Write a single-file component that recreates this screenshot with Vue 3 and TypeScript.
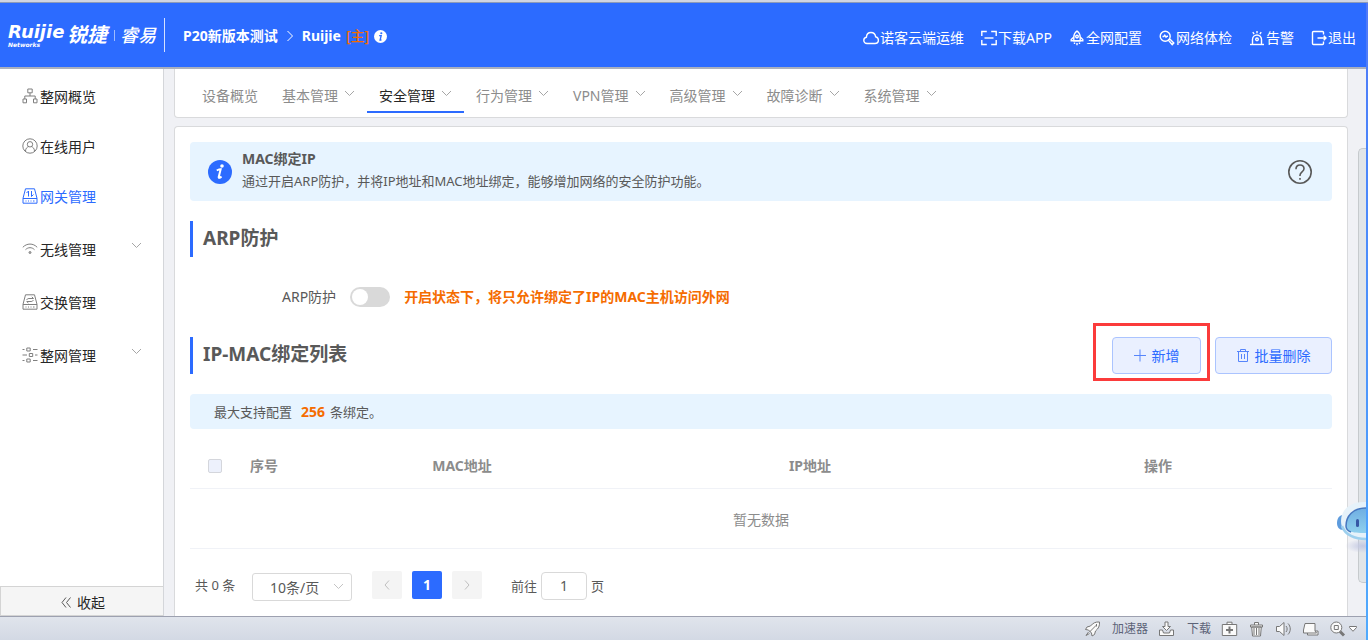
<script setup lang="ts">
import { ref } from 'vue'

interface HeaderLink { label: string; paths: string[] }
interface SideItem { label: string; paths: string[]; expandable?: boolean; active?: boolean; tall?: boolean }
interface TabItem { label: string; expandable: boolean; active?: boolean }

const chevron = 'M1 1l4.5 4.5L10 1'

const headerLinks: HeaderLink[] = [
  { label: '诺客云端运维', paths: ['M4 13.5C2 13.5 .8 12 .8 10.3 .8 8.5 2 7.400 3.400 7.200 3.600 4.300 5.500 2.500 8 2.500c2.400 0 4.300 1.700 4.600 4.200 1.700.4 2.800 1.700 2.800 3.400 0 2-1.400 3.400-3.400 3.400z'] },
  { label: '下载APP', paths: ['M.8 6V1.500h5M10.200 1.500h5V6M15.200 10v4.500h-5M5.800 14.500h-5V10', 'M3.500 8h9'] },
  { label: '全网配置', paths: ['M8 1C5.800 2.600 4.800 4.600 4.800 7v3.800h6.400V7C11.200 4.600 10.200 2.600 8 1z', 'M4.800 7L2.200 9.500v1.300h11.600V9.500L11.200 7', 'M6.700 6.500a1.300 1.300 0 1 0 2.600 0 1.300 1.300 0 1 0-2.600 0', 'M5.500 12.500v1.500M8 13v2.200M10.500 12.500v1.500'] },
  { label: '网络体检', paths: ['M1.200 6.300a5 5 0 1 0 10 0 5 5 0 1 0-10 0', 'M3.500 6.500h1.300l1-1.300 1.200 2 1-1h1', 'M9.500 10.300l1.300-1.300 4 4-1.600 1.600z'] },
  { label: '告警', paths: ['M1 14.500h14', 'M3.500 14V9.500a4.500 4.500 0 0 1 9 0V14', 'M6.700 9.300a1.300 1.300 0 1 0 2.600 0 1.300 1.300 0 1 0-2.600 0', 'M8 1v2.300M3.800 2.200l1.300 2M12.200 2.200l-1.300 2'] },
  { label: '退出', paths: ['M12.500 4.500V2.500a1 1 0 0 0-1-1H2.500a1 1 0 0 0-1 1v11a1 1 0 0 0 1 1h9a1 1 0 0 0 1-1v-2', 'M6.500 8h8.500M12.700 5.700L15 8l-2.300 2.300'] },
]

const sideItems: SideItem[] = [
  { label: '整网概览', paths: ['M5.800 1h4.400v3.800H5.800z', 'M1 11h3.500v3.800H1zM11.500 11H15v3.800h-3.500z', 'M8 5v3M2.800 11V8h10.400v3'] },
  { label: '在线用户', paths: ['M.8 8a7.200 7.200 0 1 0 14.400 0A7.200 7.200 0 1 0 .8 8', 'M5.300 6.300a2.700 2.700 0 1 0 5.400 0 2.700 2.700 0 1 0-5.400 0', 'M3.500 13c.2-2.600 1.300-3.800 3-4.300M12.500 13c-.2-2.600-1.300-3.800-3-4.300'] },
  { label: '网关管理', active: true, paths: ['M3.500.8h9l2.500 9.500v4.900H1v-4.900z', 'M1 10.500h14M3.500 13h1M6 13h1M8.500 13h1M11 13h1.500', 'M6.500 8.500V3L4.500 5M9.500 3v5.500l2-2'] },
  { label: '无线管理', expandable: true, tall: true, paths: ['M.8 6.300C4.800 2 11.200 2 15.200 6.300', 'M3.500 8.700c2.600-2.700 6.400-2.700 9 0', 'M7 11.500a1 1 0 1 0 2 0 1 1 0 1 0-2 0M7.500 11.500h1'] },
  { label: '交换管理', tall: true, paths: ['M3.500.8h9l2.500 9.500v4.900H1v-4.900z', 'M1 10.500h14M3.500 13h1M6 13h1M8.500 13h1M11 13h1.500', 'M11.500 4.500H7c-1.300 0-2 .5-2.200 1.500M9.800 2.800l1.700 1.700M4.700 7.500H9c1.300 0 2-.5 2.200-1.500M6.400 9L4.700 7.500'] },
  { label: '整网管理', expandable: true, tall: true, paths: ['M.5 2.500h2M11 2.500h4.500M4.800 1h3.400v3H4.800z', 'M.5 8h4.500M13 8h2.500M7.300 6.500h3.400v3H7.300z', 'M.5 13.500h2M11 13.500h4.500M4.800 12h3.400v3H4.800z'] },
]

const tabs: TabItem[] = [
  { label: '设备概览', expandable: false },
  { label: '基本管理', expandable: true },
  { label: '安全管理', expandable: true, active: true },
  { label: '行为管理', expandable: true },
  { label: 'VPN管理', expandable: true },
  { label: '高级管理', expandable: true },
  { label: '故障诊断', expandable: true },
  { label: '系统管理', expandable: true },
]

const arpEnabled = ref(false)
const allChecked = ref(false)
const pageSize = ref('10')
const targetPage = ref('1')
</script>

<template>
  <div class="window">
    <div class="top-strip"></div>
    <div class="frame">
      <div class="page">
        <header class="header">
          <a href="#" class="logo">
            <span class="logo-latin"><span class="logo-name">Ruijie</span><span class="logo-sub">Networks</span></span>
            <span class="logo-cn">锐捷</span>
            <span class="logo-bar"></span>
            <span class="logo-brand">睿易</span>
          </a>
          <div class="crumbs">
            <a href="#">P20新版本测试</a>
            <svg class="crumb-arrow" viewBox="0 0 8 12"><path d="M1.500 1l5 5-5 5" /></svg>
            <span>Ruijie</span>
            <span class="role">[主]</span>
            <svg class="crumb-info" viewBox="0 0 24 24">
              <circle cx="12" cy="12" r="12" fill="#fff" />
              <circle cx="13.500" cy="6" r="2" fill="#2c6bff" />
              <path d="M9.500 10.500h3.700l-1.900 8h2.500" fill="none" stroke="#2c6bff" stroke-width="2.500" />
            </svg>
          </div>
          <nav class="header-nav">
            <a v-for="link in headerLinks" :key="link.label" href="#">
              <svg class="icon header-icon" viewBox="0 0 16 16"><path v-for="d in link.paths" :key="d" :d="d" /></svg>
              <span>{{ link.label }}</span>
            </a>
          </nav>
        </header>

        <div class="body">
          <aside class="sidebar">
            <nav class="side-nav">
              <a v-for="item in sideItems" :key="item.label" href="#" class="side-item" :class="{ active: item.active, tall: item.tall }">
                <svg class="icon" viewBox="0 0 16 16"><path v-for="d in item.paths" :key="d" :d="d" /></svg>
                <span>{{ item.label }}</span>
                <svg v-if="item.expandable" class="chevron" viewBox="0 0 11 7"><path :d="chevron" /></svg>
              </a>
            </nav>
            <button type="button" class="collapse">
              <svg viewBox="0 0 10 11"><path d="M5 .5l-4 5 4 5M9.500.5l-4 5 4 5" /></svg>
              <span>收起</span>
            </button>
          </aside>

          <main class="main">
            <nav class="card tabs">
              <a v-for="tab in tabs" :key="tab.label" href="#" class="tab" :class="{ active: tab.active }">
                <span>{{ tab.label }}</span>
                <svg v-if="tab.expandable" class="chevron" viewBox="0 0 11 7"><path :d="chevron" /></svg>
              </a>
            </nav>

            <section class="card content">
              <div class="notice">
                <svg class="notice-icon" viewBox="0 0 24 24">
                  <circle cx="12" cy="12" r="12" fill="#2c6bff" />
                  <circle cx="14" cy="6" r="1.800" fill="#fff" />
                  <path d="M8.800 10.500c1.200-.9 2.500-1.500 3.900-1.300l-2 7.800c-.2 1.300 1 1.200 2.800-.5" fill="none" stroke="#fff" stroke-width="2" />
                </svg>
                <div class="notice-text">
                  <strong>MAC绑定IP</strong>
                  <p>通过开启ARP防护，并将IP地址和MAC地址绑定，能够增加网络的安全防护功能。</p>
                </div>
                <button type="button" class="help" aria-label="帮助">
                  <svg viewBox="0 0 24 24">
                    <circle cx="12" cy="12" r="11.200" />
                    <path d="M8 9.300C8 6.500 9.600 5 12 5s4 1.500 4 3.700c0 3-4 3.300-4 6.500v.8M12 18v1.800" />
                  </svg>
                </button>
              </div>

              <h2 class="section-title">ARP防护</h2>

              <div class="arp-row">
                <label for="arp-switch">ARP防护</label>
                <input id="arp-switch" v-model="arpEnabled" type="checkbox" role="switch" class="switch" />
                <span class="warning">开启状态下，将只允许绑定了IP的MAC主机访问外网</span>
              </div>

              <div class="list-head">
                <h2 class="section-title">IP-MAC绑定列表</h2>
                <div class="actions">
                  <span class="highlighted">
                    <button type="button" class="btn btn-add">
                      <svg viewBox="0 0 12 12"><path d="M6 0v12M0 6h12" /></svg>
                      <span>新增</span>
                    </button>
                  </span>
                  <button type="button" class="btn btn-delete">
                    <svg viewBox="0 0 12 13"><path d="M0 2.500h12M3.500 2.500v-2h5v2M1.500 2.500v10h9v-10M4.500 5v5M7.500 5v5" /></svg>
                    <span>批量删除</span>
                  </button>
                </div>
              </div>

              <div class="limit">最大支持配置<b>256</b>条绑定。</div>

              <table class="table">
                <colgroup><col class="col-check" /><col class="col-index" /><col /><col /><col /></colgroup>
                <thead>
                  <tr>
                    <th><input v-model="allChecked" type="checkbox" class="check" aria-label="全选" /></th>
                    <th class="index">序号</th>
                    <th>MAC地址</th>
                    <th>IP地址</th>
                    <th>操作</th>
                  </tr>
                </thead>
                <tbody><tr><td colspan="5">暂无数据</td></tr></tbody>
              </table>

              <div class="pagination">
                <span class="total">共 0 条</span>
                <span class="size">
                  <select v-model="pageSize" aria-label="每页条数">
                    <option value="10">10条/页</option>
                  </select>
                  <svg class="chevron" viewBox="0 0 11 7"><path :d="chevron" /></svg>
                </span>
                <div class="pages">
                  <button type="button" aria-label="上一页"><svg viewBox="0 0 6 10"><path d="M5 .5L1 5l4 4.500" /></svg></button>
                  <button type="button" class="current">1</button>
                  <button type="button" aria-label="下一页"><svg viewBox="0 0 6 10"><path d="M1 .5L5 5 1 9.500" /></svg></button>
                </div>
                <label class="jump">前往<input v-model="targetPage" type="text" />页</label>
              </div>
            </section>
          </main>

          <div class="scroll-track"><div class="scroll-thumb"></div></div>

          <svg class="robot" viewBox="0 0 30 60">
            <defs>
              <linearGradient id="visor" x1="0" y1="0" x2="0" y2="1"><stop offset="0" stop-color="#6faee2" /><stop offset="1" stop-color="#8fd0ee" /></linearGradient>
              <radialGradient id="shade"><stop offset="0" stop-color="#c3c8e2" /><stop offset="1" stop-color="#c3c8e2" stop-opacity="0" /></radialGradient>
            </defs>
            <ellipse cx="27" cy="45" rx="18" ry="7" fill="url(#shade)" />
            <path d="M7 14C3 14 1 18 1 22s2 7 6 7z" fill="#5d9bdd" />
            <path d="M30 1C14 0 5 9 5 20s9 19 25 19z" fill="#e6f2fa" />
            <path d="M6 25c3 9 13 13 24 13" fill="none" stroke="#9ed0ee" stroke-width="2.500" />
            <path d="M30 7C17 7 10 15 10 25c0 5 4 7 20 7z" fill="url(#visor)" />
            <path d="M30 7C17 7 10 15 10 25c0 4 2 5 5 6" fill="none" stroke="#4777bf" stroke-width="1.500" />
            <rect x="20" y="18" width="3" height="8" rx="1.500" fill="#3556a5" />
          </svg>
        </div>

        <footer class="status">
          <button type="button" class="with-text accel">
            <svg class="s-icon" viewBox="0 0 16 16"><path d="M15 1c-4-.3-6.500 1-9 4L2.500 6 1 8.500l3 .5 3 3 .5 3L10 13.500l1-3.500c3-2.500 4.300-5 4-9z" /><path d="M11.800 4.200L5 11M4 11l-2.500 3.500L5 12.500M12 3v2.500" /></svg>
            <span>加速器</span>
          </button>
          <button type="button" class="with-text">
            <svg class="s-icon" viewBox="0 0 16 16"><path d="M1 9h3l1 3h6l1-3h3v5.500H1z" /><path d="M6.500 1h3v4.500H12L8 9.500 4 5.500h2.500z" /></svg>
            <span>下载</span>
          </button>
          <button type="button" aria-label="修复"><svg class="s-icon" viewBox="0 0 16 16"><path d="M5.500 3.500V1.200h5v2.300M.8 3.500h14.400v11H.8z" /><path class="dark" d="M8 5.500v7M4.500 9h7" /></svg></button>
          <button type="button" aria-label="清理"><svg class="s-icon" viewBox="0 0 16 16"><path d="M2 4h12v2H2zM6 4V1.500h4V4M3.200 6h9.600L12 15H4z" /><path d="M5.500 7v7M8 7v7M10.500 7v7" /></svg></button>
          <button type="button" aria-label="声音"><svg class="s-icon" viewBox="0 0 16 16"><path d="M1 5.500h3L8.500 1.500v13L4 10.500H1z" /><path class="line" d="M10.500 5c1.500 1.700 1.500 4.300 0 6M12.500 2.500c3 3 3 8 0 11" /></svg></button>
          <button type="button" aria-label="窗口"><svg class="s-icon" viewBox="0 0 16 16"><path d="M5 10h10.500v4H5z" /><path d="M2.500 2.500h10V10l1.500 2H1V9z" /></svg></button>
          <button type="button" aria-label="缩放" class="zoom">
            <svg class="s-icon" viewBox="0 0 16 16"><path class="handle" d="M10 10l4.500 4.500" /><circle cx="6.800" cy="6.500" r="5.500" /><path d="M4.800 4.500h4v4h-4z" /></svg>
            <svg class="caret" viewBox="0 0 8 6"><path d="M.5.500h7v1L4 5.300.5 1.500z" /></svg>
          </button>
        </footer>
      </div>
      <div class="edge"></div>
    </div>
  </div>
</template>

<style>
body { margin: 0; }
</style>

<style scoped>
* { box-sizing: border-box; }
.window {
  display: flex;
  flex-direction: column;
  height: 100vh;
  overflow: hidden;
  font-family: "Noto Sans", "Noto Sans CJK SC", sans-serif;
  font-size: 14px;
  line-height: 20px;
  color: #595959;
  background: #f0f1f5;
}
a { color: inherit; text-decoration: none; }
button, input, select { font: inherit; color: inherit; margin: 0; padding: 0; }
button { border: 0; background: none; cursor: pointer; }
p, h2 { margin: 0; }
svg { display: block; flex: none; }
.icon { width: 16px; height: 16px; fill: none; stroke: currentColor; stroke-width: 1; }
.chevron { width: 11px; height: 7px; fill: none; stroke: #a6a6a6; stroke-width: 1; }

.top-strip { flex: none; height: 3px; background: #d0d5e2; border-bottom: 1px solid #8d9bb8; }
.frame { flex: 1; display: flex; min-height: 0; }
.page { flex: 1; display: flex; flex-direction: column; min-width: 0; }
.edge { flex: none; width: 2px; background: linear-gradient(#5078f8, #4a85fb 25%, #50aafd); }

.header {
  flex: none;
  display: flex;
  align-items: center;
  height: 66px;
  padding: 0 10px 0 8px;
  background: #2c6bff;
  border-bottom: 2px solid #aab0bd;
  color: #fff;
}
.logo { display: flex; align-items: center; width: 157px; height: 34px; border-right: 1px solid #d5e1ff; font-style: italic; font-weight: 700; white-space: nowrap; }
.logo-latin { display: flex; flex-direction: column; width: 59px; font-family: "DejaVu Sans", sans-serif; }
.logo-name { font-size: 18px; line-height: 20px; }
.logo-sub { font-size: 6px; line-height: 6px; }
.logo-cn { font-size: 20px; line-height: 24px; width: 43px; }
.logo-bar { width: 1px; height: 11px; margin: 0 5px 0 4px; background: #9dbbff; }
.logo-brand { font-size: 18px; font-weight: 500; }
.crumbs { display: flex; align-items: center; padding: 2px 0 0 18px; font-weight: 700; white-space: nowrap; }
.crumb-arrow { width: 8px; height: 12px; margin: 0 8px; fill: none; stroke: #fff; stroke-width: 1; }
.role { margin-left: 5px; color: #f56c00; font-weight: 500; }
.crumb-info { width: 13px; height: 13px; margin-left: 5px; }
.header-nav { display: flex; gap: 17px; margin-left: auto; padding-top: 6px; white-space: nowrap; }
.header-nav a { display: flex; align-items: center; gap: 1px; }
.header-icon { stroke-width: 1.400; }

.body { flex: 1; display: flex; min-height: 0; position: relative; }
.sidebar { flex: none; display: flex; flex-direction: column; width: 164px; background: #fff; border-right: 1px solid #d4d6da; }
.side-nav { flex: 1; padding-top: 3px; color: #262626; }
.side-item { display: flex; align-items: center; gap: 2px; height: 50px; padding: 0 21px 0 22px; }
.side-item.tall { height: 53px; padding-top: 2px; }
.side-item .icon { color: #7f7f7f; margin-bottom: 2px; }
.side-item .chevron { margin-left: auto; margin-bottom: 8px; }
.side-item.active, .side-item.active .icon { color: #2c6bff; }
.collapse { display: flex; align-items: center; justify-content: center; gap: 6px; height: 30px; padding: 3px 0 0 2px; border: 1px solid #d4d4d4; border-right: 0; background: #f5f5f5; color: #262626; }
.collapse svg { width: 10px; height: 11px; fill: none; stroke: #595959; }

.main { flex: 1; display: flex; flex-direction: column; gap: 8px; min-width: 0; padding: 0 10px; }
.card { background: #fff; border: 1px solid #d9dadc; border-radius: 4px; }
.tabs { flex: none; display: flex; height: 49px; padding: 0 15px 4px; border-top: 0; border-radius: 0 0 4px 4px; color: #8c8c8c; white-space: nowrap; }
.tab { display: flex; align-items: center; gap: 6px; padding: 12px 12px 0; border-bottom: 2px solid transparent; }
.tab .chevron { margin-bottom: 5px; }
.tab.active { color: #262626; border-color: #2c6bff; }
.content { flex: 1; min-height: 0; padding: 15px 15px 0; border-bottom: 0; border-radius: 4px 4px 0 0; overflow: hidden; }

.notice { display: flex; align-items: center; height: 59px; padding: 0 20px 0 18px; background: #e7f4ff; border-radius: 4px; }
.notice-icon { width: 24px; height: 24px; margin-right: 10px; }
.notice-text { flex: 1; padding-bottom: 4px; }
.notice-text strong { display: block; line-height: 22px; }
.notice-text p { font-size: 13px; line-height: 22px; }
.help svg { width: 24px; height: 24px; fill: none; stroke: #595959; stroke-width: 1.600; }

.section-title { height: 36px; margin-top: 20px; padding-left: 10px; border-left: 3px solid #2c6bff; font-size: 19px; font-weight: 700; line-height: 35px; }
.arp-row { display: flex; align-items: center; height: 20px; margin: 30px 0; padding-left: 92px; }
.arp-row label { line-height: 22px; }
.switch { appearance: none; width: 40px; height: 20px; margin: 0 14px; padding: 2px; border-radius: 10px; background: #d9d9d9; }
.switch::before { content: ""; display: block; width: 16px; height: 16px; border-radius: 50%; background: #fff; }
.switch:checked { background: #2c6bff; }
.switch:checked::before { margin-left: auto; }
.warning { color: #f56c00; font-weight: 700; }

.list-head { display: flex; align-items: center; justify-content: space-between; height: 37px; }
.list-head .section-title { height: 37px; margin-top: 0; }
.actions { display: flex; align-items: flex-start; gap: 5px; }
.highlighted { display: flex; padding: 11px 6px 4px 16px; margin: -14px 0 -7px; border: 3px solid #fb3b3b; }
.btn { display: flex; align-items: center; justify-content: center; gap: 6px; height: 37px; border: 1px solid #abc4ff; border-radius: 4px; background: #eaf0ff; color: #2c6bff; }
.btn svg { width: 12px; height: 13px; fill: none; stroke: #5685fb; stroke-width: 1; }
.btn-add { width: 89px; }
.btn-delete { width: 117px; }

.limit { height: 35px; margin-top: 20px; padding-left: 24px; background: #e7f4ff; border-radius: 4px; font-size: 13px; line-height: 35px; }
.limit b { margin: 0 5px 0 9px; color: #f56c00; font-size: 14px; }

.table { width: 100%; margin-top: 16px; border-collapse: collapse; table-layout: fixed; color: #8c8c8c; text-align: center; }
.col-check { width: 50px; }
.col-index { width: 48px; }
.table th { height: 43px; padding: 0; border-bottom: 1px solid #f0f2f7; font-weight: 700; }
.table th.index { padding-left: 10px; text-align: left; }
.table td { height: 60px; padding: 3px 0 0; border-bottom: 1px solid #f0f2f7; }
.check { appearance: none; display: block; width: 14px; height: 14px; margin: 0 auto; border: 1px solid #d4d6dc; border-radius: 2px; background: #edf1fc; }
.check:checked { background: #2c6bff; }

.pagination { display: flex; align-items: center; height: 30px; margin-top: 22px; padding-left: 5px; font-size: 13px; white-space: nowrap; }
.total { width: 57px; padding-bottom: 2px; }
.size { display: flex; align-items: center; width: 100px; height: 28px; border: 1px solid #d9d9d9; border-radius: 3px; margin-top: 2px; }
.size select { flex: 1; appearance: none; height: 26px; padding: 2px 0 0 17px; border: 0; background: none; font-size: 14px; }
.size .chevron { margin-right: 7px; stroke: #c4c4c4; }
.pages { display: flex; gap: 10px; margin: 0 29px 2px 20px; }
.pages button { display: flex; align-items: center; justify-content: center; width: 30px; height: 28px; border-radius: 2px; background: #f4f4f4; }
.pages svg { width: 6px; height: 10px; fill: none; stroke: #bfbfbf; }
.pages .current { background: #2c6bff; color: #fff; font-size: 14px; font-weight: 700; }
.jump { display: flex; align-items: center; gap: 4px; }
.jump input { width: 46px; height: 28px; border: 1px solid #d9d9d9; border-radius: 4px; background: #fff; text-align: center; font-size: 14px; }

.scroll-track { flex: none; display: flex; width: 8px; padding: 79px 0 33px; }
.scroll-thumb { flex: 1; border: 1px solid #c6cacd; border-right: 0; border-radius: 5px 0 0 5px; background: #e1e5e8; }
.robot { position: absolute; right: 0; bottom: 55px; width: 30px; height: 60px; }

.status { flex: none; display: flex; align-items: center; justify-content: flex-end; gap: 10px; height: 24px; padding: 1px 9px 0 0; border-top: 1px solid #9da1b0; background: linear-gradient(#e0e4ec, #d3d9e4); color: #5d6378; font-size: 12px; line-height: 18px; }
.with-text { display: flex; align-items: center; gap: 12px; }
.accel { gap: 11px; }
.s-icon { width: 17px; height: 16px; fill: #fafafa; stroke: #777; stroke-width: 1; }
.s-icon .dark { stroke-width: 2; }
.s-icon .line { fill: none; }
.s-icon .handle { stroke-width: 3; }
.zoom { display: flex; align-items: center; gap: 3px; }
.caret { width: 8px; height: 6px; fill: #fff; stroke: #777; }
</style>
